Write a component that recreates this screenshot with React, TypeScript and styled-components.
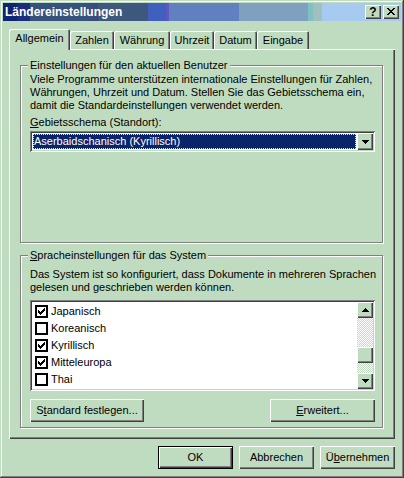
import React from "react";
import styled, { createGlobalStyle } from "styled-components";

const FACE = "#c0dcc0";

const GlobalStyle = createGlobalStyle`
  html, body {
    margin: 0;
    padding: 0;
    background: ${FACE};
  }
  body {
    font-family: "Liberation Sans", Arial, sans-serif;
    font-size: 11px;
  }
`;

const raised = `
  box-shadow: inset 1px 1px #ffffff, inset -1px -1px #404040,
    inset -2px -2px #808080;
`;

const sunken = `
  box-shadow: inset 1px 1px #808080, inset -1px -1px #ffffff,
    inset 2px 2px #404040, inset -2px -2px ${FACE};
`;

const Window = styled.div`
  box-sizing: border-box;
  width: 404px;
  height: 478px;
  padding: 3px;
  background: ${FACE};
  box-shadow: inset -1px -1px #404040, inset 1px 1px ${FACE},
    inset -2px -2px #808080, inset 2px 2px #ffffff;
  display: flex;
  flex-direction: column;
  color: #000;
  font-size: 11px;
  line-height: 13px;
`;

// dithered 256 colour gradient, hence the hard bands
const TitleBar = styled.div`
  height: 18px;
  display: flex;
  align-items: center;
  padding: 0 2px;
  background: linear-gradient(
    to right,
    #102474 0 14px,
    #1c2c7c 14px 27px,
    #36527c 27px 89px,
    #3c4880 89px 95px,
    #3c587c 95px 145px,
    #4060c0 145px 163px,
    #6058c0 163px 166px,
    #6080c0 166px 236px,
    #80a0c0 236px 305px,
    #80c0c0 305px 310px,
    #a0c0c0 310px 319px,
    #a6caf0 319px
  );
`;

const Title = styled.div`
  flex: 1;
  color: #ffffff;
  font-weight: bold;
  font-size: 12px;
`;

const CaptionButton = styled.div`
  box-sizing: border-box;
  width: 16px;
  height: 14px;
  margin-left: 2px;
  background: ${FACE};
  ${raised}
  display: flex;
  align-items: center;
  justify-content: center;
  font-weight: bold;
  font-size: 12px;
  line-height: 12px;
  padding-bottom: 1px;
`;

const TabRow = styled.div`
  position: relative;
  z-index: 1;
  display: flex;
  align-items: flex-end;
  height: 20px;
  margin: 8px 0 0 6px;
`;

const Tab = styled.div<{ $active?: boolean; $w: number }>`
  box-sizing: border-box;
  width: ${(p) => p.$w}px;
  height: ${(p) => (p.$active ? 21 : 18)}px;
  margin-bottom: ${(p) => (p.$active ? -1 : 0)}px;
  padding-top: 3px;
  text-align: center;
  background: ${FACE};
  border-radius: 2px 2px 0 0;
  box-shadow: inset 1px 1px #ffffff, inset -1px 0 #404040,
    inset -2px 0 #808080;
`;

const Panel = styled.div`
  box-sizing: border-box;
  width: 386px;
  height: 390px;
  margin-left: 6px;
  padding: 16px 12px 0 11px;
  box-shadow: inset 1px 1px #ffffff, inset -1px -1px #404040,
    inset -2px -2px #808080;
  display: flex;
  flex-direction: column;
`;

const Group = styled.div<{ $top: number; $h?: number }>`
  position: relative;
  box-sizing: border-box;
  ${(p) => (p.$h ? `height: ${p.$h}px;` : "")}
  border: 1px solid #808080;
  box-shadow: inset 1px 1px #ffffff, 1px 1px #ffffff;
  padding: ${(p) => p.$top}px 0 5px 9px;
  & + & {
    margin-top: 12px;
  }
`;

const Legend = styled.div`
  position: absolute;
  top: -7px;
  left: 7px;
  padding: 0 2px;
  background: ${FACE};
`;

const Text = styled.p`
  margin: 0;
`;

const Label = styled.div`
  margin-top: 4px;
`;

const Combo = styled.div`
  box-sizing: border-box;
  width: 345px;
  height: 21px;
  margin-top: 2px;
  padding: 2px;
  background: #ffffff;
  ${sunken}
  display: flex;
`;

const ComboValue = styled.div`
  flex: 1;
  margin: 1px;
  padding-left: 1px;
  background: #0a246a;
  color: #ffffff;
  line-height: 15px;
  outline: 1px dotted #f0e890;
  outline-offset: -1px;
`;

const ArrowButton = styled.div<{ $h: number }>`
  box-sizing: border-box;
  width: 16px;
  height: ${(p) => p.$h}px;
  background: ${FACE};
  ${raised}
  display: flex;
  align-items: center;
  justify-content: center;
`;

const ListBox = styled.div`
  box-sizing: border-box;
  width: 345px;
  height: 91px;
  margin-top: 6px;
  padding: 2px;
  background: #ffffff;
  ${sunken}
  display: flex;
`;

const Items = styled.div`
  flex: 1;
  padding-top: 1px;
`;

const Item = styled.div`
  display: flex;
  align-items: center;
  height: 17px;
  padding-left: 3px;
  gap: 3px;
`;

const CheckBox = styled.div`
  box-sizing: border-box;
  width: 13px;
  height: 13px;
  border: 2px solid #000000;
  background: #ffffff;
  display: flex;
  align-items: center;
  justify-content: center;
`;

const ScrollBar = styled.div`
  width: 16px;
  display: flex;
  flex-direction: column;
`;

const Track = styled.div<{ $h?: number }>`
  ${(p) => (p.$h ? `height: ${p.$h}px;` : "flex: 1;")}
  background: repeating-conic-gradient(#ffffff 0 25%, ${FACE} 0 50%) 0 0 / 2px
    2px;
`;

const Thumb = styled.div`
  box-sizing: border-box;
  width: 16px;
  height: 16px;
  background: ${FACE};
  ${raised}
`;

const ButtonRow = styled.div`
  display: flex;
  justify-content: space-between;
  width: 345px;
  margin-top: 8px;
`;

const PushButton = styled.div<{ $w: number; $default?: boolean }>`
  box-sizing: border-box;
  width: ${(p) => p.$w}px;
  height: 23px;
  background: ${FACE};
  display: flex;
  align-items: center;
  justify-content: center;
  ${(p) =>
    p.$default
      ? `box-shadow: inset 0 0 0 1px #000000, inset 2px 2px #ffffff,
    inset -2px -2px #404040, inset -3px -3px #808080;`
      : raised}
`;

const Footer = styled.div`
  display: flex;
  justify-content: flex-end;
  gap: 6px;
  margin-top: 7px;
  padding-right: 6px;
`;

const Check = () => (
  <svg width="7" height="7" viewBox="0 0 7 7" shapeRendering="crispEdges">
    <path
      d="M0 2h1v3H0z M1 3h1v3H1z M2 4h1v3H2z M3 3h1v3H3z M4 2h1v3H4z M5 1h1v3H5z M6 0h1v3H6z"
      fill="#000"
    />
  </svg>
);

const Arrow = ({ up }: { up?: boolean }) => (
  <svg width="7" height="4" viewBox="0 0 7 4" shapeRendering="crispEdges">
    <path
      d={
        up
          ? "M3 0h1v1H3z M2 1h3v1H2z M1 2h5v1H1z M0 3h7v1H0z"
          : "M0 0h7v1H0z M1 1h5v1H1z M2 2h3v1H2z M3 3h1v1H3z"
      }
      fill="#000"
    />
  </svg>
);

const CloseGlyph = () => (
  <svg width="8" height="7" viewBox="0 0 8 7" shapeRendering="crispEdges">
    <path
      d="M0 0h2v1H0z M6 0h2v1H6z M1 1h2v1H1z M5 1h2v1H5z M2 2h4v1H2z M3 3h2v1H3z M2 4h4v1H2z M1 5h2v1H1z M5 5h2v1H5z M0 6h2v1H0z M6 6h2v1H6z"
      fill="#000"
    />
  </svg>
);

const tabs = [
  { label: "Allgemein", w: 61 },
  { label: "Zahlen", w: 44 },
  { label: "Währung", w: 56 },
  { label: "Uhrzeit", w: 44 },
  { label: "Datum", w: 43 },
  { label: "Eingabe", w: 52 },
];

const languages = [
  { name: "Japanisch", on: true },
  { name: "Koreanisch", on: false },
  { name: "Kyrillisch", on: true },
  { name: "Mitteleuropa", on: true },
  { name: "Thai", on: false },
];

export default function App() {
  return (
    <>
      <GlobalStyle />
      <Window>
        <TitleBar>
          <Title>Ländereinstellungen</Title>
          <CaptionButton>?</CaptionButton>
          <CaptionButton>
            <CloseGlyph />
          </CaptionButton>
        </TitleBar>

        <TabRow>
          {tabs.map((t, i) => (
            <Tab key={t.label} $w={t.w} $active={i === 0}>
              {t.label}
            </Tab>
          ))}
        </TabRow>

        <Panel>
          <Group $top={7} $h={178}>
            <Legend>Einstellungen für den aktuellen Benutzer</Legend>
            <Text>
              Viele Programme unterstützen internationale Einstellungen für
              Zahlen,
              <br />
              Währungen, Uhrzeit und Datum. Stellen Sie das Gebietsschema ein,
              <br />
              damit die Standardeinstellungen verwendet werden.
            </Text>
            <Label>
              <u>G</u>ebietsschema (Standort):
            </Label>
            <Combo>
              <ComboValue>Aserbaidschanisch (Kyrillisch)</ComboValue>
              <ArrowButton $h={17}>
                <Arrow />
              </ArrowButton>
            </Combo>
          </Group>

          <Group $top={12}>
            <Legend>
              <u>S</u>pracheinstellungen für das System
            </Legend>
            <Text>
              Das System ist so konfiguriert, dass Dokumente in mehreren
              Sprachen
              <br />
              gelesen und geschrieben werden können.
            </Text>
            <ListBox>
              <Items>
                {languages.map((l) => (
                  <Item key={l.name}>
                    <CheckBox>{l.on && <Check />}</CheckBox>
                    {l.name}
                  </Item>
                ))}
              </Items>
              <ScrollBar>
                <ArrowButton $h={16}>
                  <Arrow up />
                </ArrowButton>
                <Track $h={29} />
                <Thumb />
                <Track />
                <ArrowButton $h={16}>
                  <Arrow />
                </ArrowButton>
              </ScrollBar>
            </ListBox>
            <ButtonRow>
              <PushButton $w={114}>
                S<u>t</u>andard festlegen...
              </PushButton>
              <PushButton $w={105}>
                <u>E</u>rweitert...
              </PushButton>
            </ButtonRow>
          </Group>
        </Panel>

        <Footer>
          <PushButton $w={75} $default>
            OK
          </PushButton>
          <PushButton $w={75}>Abbrechen</PushButton>
          <PushButton $w={75}>
            Ü<u>b</u>ernehmen
          </PushButton>
        </Footer>
      </Window>
    </>
  );
}
